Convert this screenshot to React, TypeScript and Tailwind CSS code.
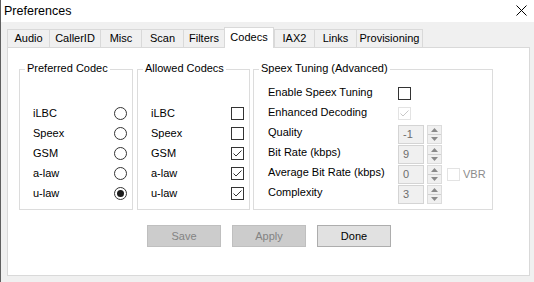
import React from "react";

const font = { fontFamily: '"Liberation Sans", Arial, sans-serif' };

function Radio({ checked }: { checked?: boolean }) {
  return (
    <svg width="13" height="13" viewBox="0 0 13 13" className="block">
      <circle cx="6.5" cy="6.5" r="6" fill="#fff" stroke="#333" strokeWidth="1" />
      {checked && <circle cx="6.5" cy="6.5" r="3.5" fill="#1b1b1b" />}
    </svg>
  );
}

function Check({ checked, disabled }: { checked?: boolean; disabled?: boolean }) {
  const stroke = disabled ? "#c8c8c8" : "#333";
  return (
    <svg width="13" height="13" viewBox="0 0 13 13" className="block">
      <rect x="0.5" y="0.5" width="12" height="12" fill="#fff" stroke={disabled ? "#e3e3e3" : "#333"} />
      {checked && (
        <polyline points="2.5,6.5 5,9 10.5,3.5" fill="none" stroke={stroke} strokeWidth="1" />
      )}
    </svg>
  );
}

function Spin({ value }: { value: string }) {
  return (
    <div className="flex items-center">
      <div className="w-[26px] h-[19px] border border-[#d4d4d4] bg-[#f0f0f0] text-[#6d6d6d] pl-[4px] leading-[17px]">
        {value}
      </div>
      <div className="ml-[3px] w-[15px] h-[19px] border border-[#dcdcdc] bg-[#f0f0f0] flex flex-col">
        <div className="flex-1 flex items-center justify-center border-b border-[#d0d0d0]">
          <svg width="7" height="4" viewBox="0 0 7 4"><polygon points="0,4 3.5,0 7,4" fill="#8a8a8a" /></svg>
        </div>
        <div className="flex-1 flex items-center justify-center">
          <svg width="7" height="4" viewBox="0 0 7 4"><polygon points="0,0 3.5,4 7,0" fill="#8a8a8a" /></svg>
        </div>
      </div>
    </div>
  );
}

function Group({ title, className, children }: { title: string; className: string; children: React.ReactNode }) {
  return (
    <div className={"relative h-[141px] border border-[#dcdcdc] " + className}>
      <span className="absolute left-[5px] top-[-8px] px-[2px] bg-white leading-[13px] text-black">{title}</span>
      {children}
    </div>
  );
}

const codecs = ["iLBC", "Speex", "GSM", "a-law", "u-law"];

export default function App() {
  const tabs = [
    { name: "Audio", w: "w-[42px]" },
    { name: "CallerID", w: "w-[51px]" },
    { name: "Misc", w: "w-[41px]" },
    { name: "Scan", w: "w-[42px]" },
    { name: "Filters", w: "w-[41px]" },
    { name: "Codecs", w: "w-[50px]", sel: true },
    { name: "IAX2", w: "w-[40px]" },
    { name: "Links", w: "w-[42px]" },
    { name: "Provisioning", w: "w-[67px]", last: true },
  ];
  const allowed = [false, false, true, true, true];
  return (
    <div className="w-[534px] h-[282px] border-l border-[#5f5f5f] bg-[#f0f0f0] text-[11px] text-black overflow-hidden" style={font}>
      <div className="h-[22px] bg-white flex items-center justify-between pl-[3px] pr-[7px]">
        <span className="text-[12.5px] leading-[16px] text-black">Preferences</span>
        <svg width="11" height="11" viewBox="0 0 11 11" className="mb-[1px]">
          <line x1="0.5" y1="0.5" x2="10.5" y2="10.5" stroke="#000" strokeWidth="1" />
          <line x1="10.5" y1="0.5" x2="0.5" y2="10.5" stroke="#000" strokeWidth="1" />
        </svg>
      </div>
      <div className="pl-[6px]">
        <div className="flex items-end h-[20px] mt-[5px]">
          {tabs.map((t) =>
            t.sel ? (
              <div
                key={t.name}
                className={"relative z-10 -mb-px h-[21px] bg-white border-t border-l border-r border-[#d9d9d9] flex items-center justify-center pb-[2px] " + t.w}
              >
                {t.name}
              </div>
            ) : (
              <div
                key={t.name}
                className={"h-[18px] border-t border-l border-[#d9d9d9] flex items-center justify-center " + (t.last ? "border-r " : "") + t.w}
              >
                {t.name}
              </div>
            )
          )}
        </div>
        <div className="w-[523px] h-[229px] border border-[#d9d9d9] bg-white">
          <div className="flex pl-[11px] pt-[21px]">
            <Group title="Preferred Codec" className="w-[114px]">
              <div className="pt-[33px] pl-[13px] pr-[5px]">
                {codecs.map((c, i) => (
                  <div key={c} className="h-[20px] flex items-center justify-between">
                    <span>{c}</span>
                    <Radio checked={i === 4} />
                  </div>
                ))}
              </div>
            </Group>
            <Group title="Allowed Codecs" className="w-[113px] ml-[4px]">
              <div className="pt-[33px] pl-[13px] pr-[5px]">
                {codecs.map((c, i) => (
                  <div key={c} className="h-[20px] flex items-center justify-between">
                    <span>{c}</span>
                    <Check checked={allowed[i]} />
                  </div>
                ))}
              </div>
            </Group>
            <Group title="Speex Tuning (Advanced)" className="w-[240px] ml-[3px]">
              <div className="pt-[12px] pl-[14px]">
                <div className="h-[20px] flex items-center">
                  <span className="w-[130px]">Enable Speex Tuning</span>
                  <div className="mt-[3px]"><Check /></div>
                </div>
                <div className="h-[20px] flex items-center">
                  <span className="w-[130px]">Enhanced Decoding</span>
                  <div className="mt-[3px]"><Check checked disabled /></div>
                </div>
                <div className="h-[20px] flex items-center">
                  <span className="w-[130px]">Quality</span>
                  <div className="mt-[4px]"><Spin value="-1" /></div>
                </div>
                <div className="h-[20px] flex items-center">
                  <span className="w-[130px]">Bit Rate (kbps)</span>
                  <div className="mt-[4px]"><Spin value="9" /></div>
                </div>
                <div className="h-[20px] flex items-center">
                  <span className="w-[130px]">Average Bit Rate (kbps)</span>
                  <div className="mt-[4px] flex items-center">
                    <Spin value="0" />
                    <div className="ml-[5px]"><Check disabled /></div>
                    <span className="ml-[3px] text-[#8c8c8c]">VBR</span>
                  </div>
                </div>
                <div className="h-[20px] flex items-center">
                  <span className="w-[130px]">Complexity</span>
                  <div className="mt-[4px]"><Spin value="3" /></div>
                </div>
              </div>
            </Group>
          </div>
          <div className="flex ml-[139px] mt-[15px] gap-[11px]">
            <div className="w-[74px] h-[22px] border border-[#bfbfbf] bg-[#cccccc] text-[#838383] flex items-center justify-center">Save</div>
            <div className="w-[74px] h-[22px] border border-[#bfbfbf] bg-[#cccccc] text-[#838383] flex items-center justify-center">Apply</div>
            <div className="w-[74px] h-[22px] border border-[#adadad] bg-[#e1e1e1] text-black flex items-center justify-center">Done</div>
          </div>
        </div>
      </div>
    </div>
  );
}
